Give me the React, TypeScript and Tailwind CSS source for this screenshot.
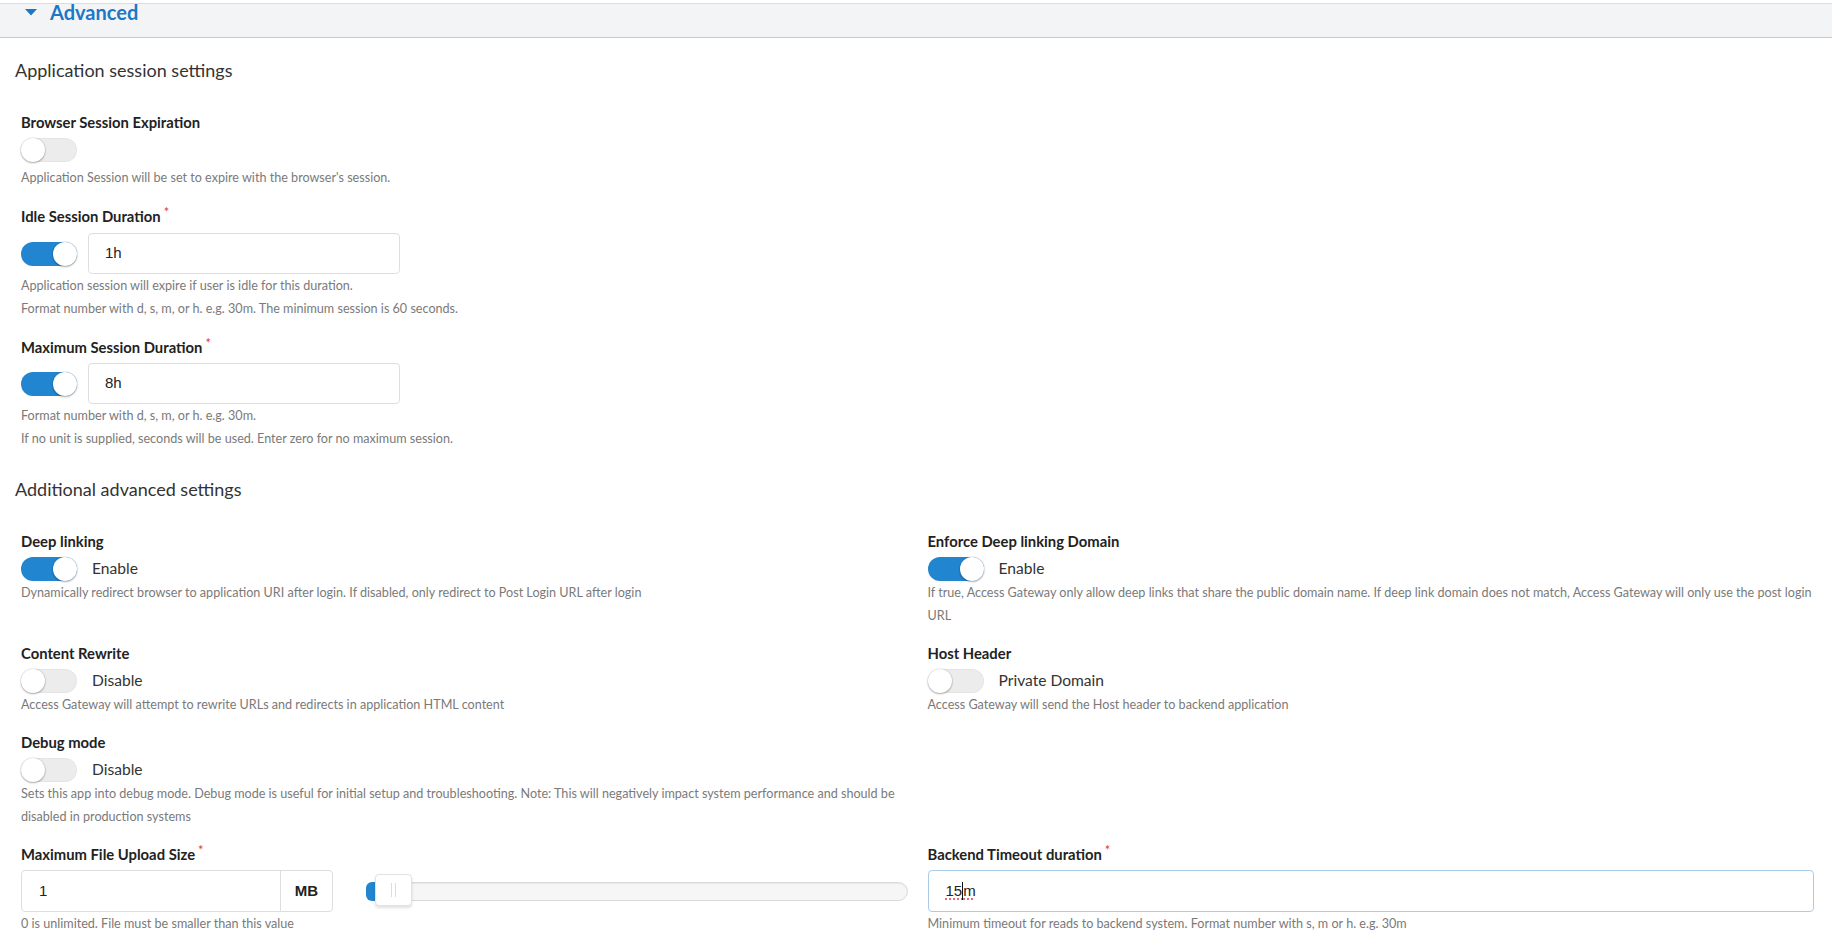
import React from 'react';

function Toggle({ on = false }: { on?: boolean }) {
  return (
    <div
      className={`relative w-[56px] h-[24px] rounded-full shrink-0 ${
        on ? 'bg-[#2185d0]' : 'bg-[#ececec] shadow-[inset_0_0_0_1px_rgba(0,0,0,0.03)]'
      }`}
    >
      <div
        className={`absolute top-0 w-[24px] h-[24px] rounded-full bg-white shadow-[0_1px_2px_rgba(0,0,0,0.3),0_0_0_1px_rgba(0,0,0,0.06)] ${
          on ? 'right-0' : 'left-0'
        }`}
      />
    </div>
  );
}

function Label({ children, required }: { children: React.ReactNode; required?: boolean }) {
  return (
    <div className="h-[20px] leading-[20px] text-[14.8px] font-bold text-[#222]">
      {children}
      {required && (
        <span className="relative -top-[5px] ml-[3px] text-[13px] font-normal text-[#e2373f]">*</span>
      )}
    </div>
  );
}

function Help({ children }: { children: React.ReactNode }) {
  return <p className="text-[12.6px] leading-[23px] text-[#7a7a7a]">{children}</p>;
}

function ToggleRow({ on, text }: { on?: boolean; text: string }) {
  return (
    <div className="mt-[6px] flex items-center gap-[15px] h-[24px]">
      <Toggle on={on} />
      <span className="text-[15.6px] text-[#333]">{text}</span>
    </div>
  );
}

function DurationRow({ value }: { value: string }) {
  return (
    <div className="flex items-center gap-[11px]">
      <Toggle on />
      <div className="w-[312px] h-[41px] border border-[#dedede] rounded-[4px] bg-white flex items-center pl-[16px] font-[Liberation_Sans,Arial,sans-serif] text-[15px] text-[#222]">
        {value}
      </div>
    </div>
  );
}

function Slider() {
  return (
    <div className="relative flex-1 h-[19px] rounded-full border border-[#dadada] bg-[#f6f6f6] shadow-[inset_0_1px_1px_rgba(0,0,0,0.06)]">
      <div className="absolute -left-px -top-px h-[19px] w-[16px] rounded-l-[6px] bg-[#2185d0]" />
      <div className="absolute left-[8px] -top-[9px] w-[37px] h-[32px] rounded-[4px] bg-white border border-[#e2e2e2] shadow-[0_2px_3px_rgba(0,0,0,0.12)] flex items-center justify-center gap-[3px]">
        <span className="w-px h-[14px] bg-[#dcdcdc]" />
        <span className="w-px h-[14px] bg-[#dcdcdc]" />
      </div>
    </div>
  );
}

export default function App() {
  return (
    <div className="min-h-screen bg-white font-[Lato,sans-serif] text-[#333] overflow-hidden">
      {/* Advanced header */}
      <div className="mt-[3px] h-[35px] border-y border-t-[#dedede] border-b-[#c9c9c9] bg-[#f3f4f5]">
        <div className="-mt-[4px] flex items-center h-[24px] pl-[25px]">
          <svg width="12" height="7" viewBox="0 0 12 7" className="mt-[1px]">
            <polygon points="0,0 12,0 6,6.5" fill="#1d77c7" />
          </svg>
          <span className="ml-[13px] text-[20px] leading-[24px] font-bold text-[#1d77c7]">Advanced</span>
        </div>
      </div>

      {/* Application session settings */}
      <h2 className="mt-[20px] px-[15px] text-[18px] leading-[24px] text-[#333]">Application session settings</h2>

      <div className="pl-[21px] pr-[18px]">
        <div className="mt-[30px]">
          <Label>Browser Session Expiration</Label>
          <div className="mt-[6px]">
            <Toggle />
          </div>
          <div className="mt-[4px]">
            <Help>Application Session will be set to expire with the browser's session.</Help>
          </div>
        </div>

        <div className="mt-[17px]">
          <Label required>Idle Session Duration</Label>
          <div className="mt-[7px]">
            <DurationRow value="1h" />
          </div>
          <Help>Application session will expire if user is idle for this duration.</Help>
          <Help>Format number with d, s, m, or h. e.g. 30m. The minimum session is 60 seconds.</Help>
        </div>

        <div className="mt-[17px]">
          <Label required>Maximum Session Duration</Label>
          <div className="mt-[6px]">
            <DurationRow value="8h" />
          </div>
          <Help>Format number with d, s, m, or h. e.g. 30m.</Help>
          <Help>If no unit is supplied, seconds will be used. Enter zero for no maximum session.</Help>
        </div>
      </div>

      {/* Additional advanced settings */}
      <h2 className="mt-[27px] px-[15px] text-[18px] leading-[24px] text-[#333]">Additional advanced settings</h2>

      <div className="mt-[30px] pl-[21px] pr-[18px] grid grid-cols-2 gap-x-[20px] gap-y-[16px]">
        <div>
          <Label>Deep linking</Label>
          <ToggleRow on text="Enable" />
          <Help>Dynamically redirect browser to application URI after login. If disabled, only redirect to Post Login URL after login</Help>
        </div>
        <div>
          <Label>Enforce Deep linking Domain</Label>
          <ToggleRow on text="Enable" />
          <Help>
            If true, Access Gateway only allow deep links that share the public domain name. If deep link domain does not match, Access Gateway will only use the post login URL
          </Help>
        </div>

        <div>
          <Label>Content Rewrite</Label>
          <ToggleRow text="Disable" />
          <Help>Access Gateway will attempt to rewrite URLs and redirects in application HTML content</Help>
        </div>
        <div>
          <Label>Host Header</Label>
          <ToggleRow text="Private Domain" />
          <Help>Access Gateway will send the Host header to backend application</Help>
        </div>

        <div>
          <Label>Debug mode</Label>
          <ToggleRow text="Disable" />
          <Help>
            Sets this app into debug mode. Debug mode is useful for initial setup and troubleshooting. Note: This will negatively impact system performance and should be disabled in production systems
          </Help>
        </div>
        <div />

        <div>
          <Label required>Maximum File Upload Size</Label>
          <div className="mt-[6px] flex items-center">
            <div className="w-[312px] h-[42px] flex border border-[#dedede] rounded-[4px] bg-white font-[Liberation_Sans,Arial,sans-serif] text-[15px] text-[#222]">
              <div className="flex-1 flex items-center pl-[17px]">1</div>
              <div className="w-[52px] border-l border-[#dedede] flex items-center justify-center font-bold">MB</div>
            </div>
            <div className="ml-[33px] flex-1 flex items-center">
              <Slider />
            </div>
          </div>
          <Help>0 is unlimited. File must be smaller than this value</Help>
        </div>
        <div>
          <Label required>Backend Timeout duration</Label>
          <div className="mt-[6px] h-[42px] border border-[#a9cbe8] rounded-[4px] bg-white flex items-center pl-[17px] font-[Liberation_Sans,Arial,sans-serif] text-[15px] text-[#222]">
            <span className="underline decoration-dotted decoration-[#e53935] underline-offset-[3px]">15</span>
            <span className="w-px h-[18px] bg-[#111]" />
            <span className="underline decoration-dotted decoration-[#e53935] underline-offset-[3px]">m</span>
          </div>
          <Help>Minimum timeout for reads to backend system. Format number with s, m or h. e.g. 30m</Help>
        </div>
      </div>
    </div>
  );
}
